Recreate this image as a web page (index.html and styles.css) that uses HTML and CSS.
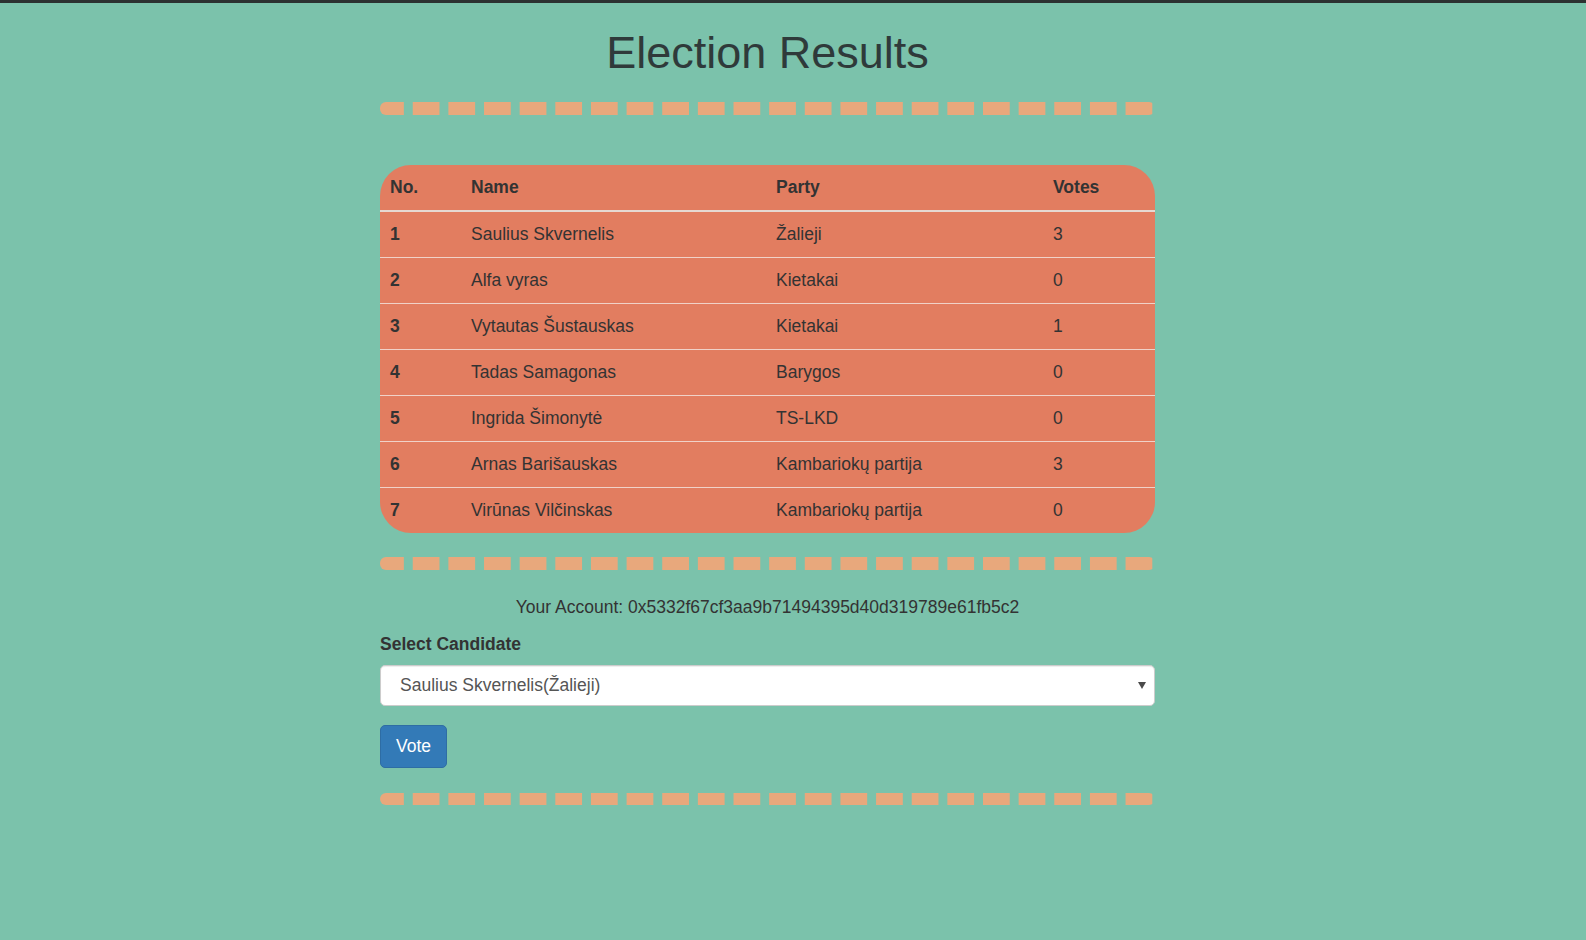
FILE: index.html
```html
<!DOCTYPE html>
<html lang="lt">
<head>
<meta charset="utf-8">
<title>Election Results</title>
<link rel="stylesheet" href="styles.css">
</head>
<body>
<div class="topbar"></div>
<main class="page">
  <h1 class="title">Election Results</h1>
  <div class="dashes dashes-first"></div>

  <div class="results">
    <table class="results-table">
      <colgroup>
        <col class="c-no"><col class="c-name"><col class="c-party"><col class="c-votes">
      </colgroup>
      <thead>
        <tr><th>No.</th><th>Name</th><th>Party</th><th>Votes</th></tr>
      </thead>
      <tbody>
        <tr><th>1</th><td>Saulius Skvernelis</td><td>Žalieji</td><td>3</td></tr>
        <tr><th>2</th><td>Alfa vyras</td><td>Kietakai</td><td>0</td></tr>
        <tr><th>3</th><td>Vytautas Šustauskas</td><td>Kietakai</td><td>1</td></tr>
        <tr><th>4</th><td>Tadas Samagonas</td><td>Barygos</td><td>0</td></tr>
        <tr><th>5</th><td>Ingrida Šimonytė</td><td>TS-LKD</td><td>0</td></tr>
        <tr><th>6</th><td>Arnas Barišauskas</td><td>Kambariokų partija</td><td>3</td></tr>
        <tr><th>7</th><td>Virūnas Vilčinskas</td><td>Kambariokų partija</td><td>0</td></tr>
      </tbody>
    </table>
  </div>

  <div class="dashes dashes-second"></div>

  <p class="account">Your Account: 0x5332f67cf3aa9b71494395d40d319789e61fb5c2</p>

  <form class="vote-form">
    <label class="field-label" for="candidate">Select Candidate</label>
    <div class="select-wrap">
      <select id="candidate" class="select">
        <option>Saulius Skvernelis(Žalieji)</option>
        <option>Alfa vyras(Kietakai)</option>
        <option>Vytautas Šustauskas(Kietakai)</option>
        <option>Tadas Samagonas(Barygos)</option>
        <option>Ingrida Šimonytė(TS-LKD)</option>
        <option>Arnas Barišauskas(Kambariokų partija)</option>
        <option>Virūnas Vilčinskas(Kambariokų partija)</option>
      </select>
      <span class="select-arrow"></span>
    </div>
    <button type="button" class="btn">Vote</button>
  </form>

  <div class="dashes dashes-third"></div>
</main>
</body>
</html>
```

FILE: styles.css
```css
html, body {
  margin: 0;
  padding: 0;
}

body {
  background: #7bc2ab;
  color: #333;
  font-family: "Liberation Sans", Arial, Helvetica, sans-serif;
  font-size: 17.5px;
  line-height: 25px;
  min-height: 940px;
}

.topbar {
  height: 3px;
  background: #2c3131;
}

.page {
  width: 775px;
  margin-left: 380px;
}

.title {
  margin: 25px 0 0;
  font-size: 45px;
  font-weight: 400;
  line-height: 49.5px;
  text-align: center;
  color: #2f3a3a;
}

.dashes {
  height: 12.5px;
  border-radius: 6px;
  background: linear-gradient(to right, #e8a87c 0, #e8a87c 26.5px, transparent 26.5px) -2.9px 0 / 35.65px 100% repeat-x;
}

.dashes-first {
  margin-top: 24.5px;
}

.dashes-second {
  margin-top: 24px;
}

.dashes-third {
  margin-top: 24.5px;
}

.results {
  margin-top: 50px;
  border-radius: 31px;
  overflow: hidden;
  background: #e27d60;
}

.results-table {
  width: 100%;
  border-collapse: separate;
  border-spacing: 0;
  table-layout: fixed;
}

.c-no { width: 81px; }
.c-name { width: 305px; }
.c-party { width: 277px; }
.c-votes { width: 112px; }

.results-table th,
.results-table td {
  padding: 10px;
  height: 25px;
  text-align: left;
  line-height: 25px;
  vertical-align: middle;
}

.results-table thead th {
  font-weight: 700;
  border-bottom: 2.5px solid #e6d9d2;
}

.results-table thead th,
.results-table tbody tr:first-child th,
.results-table tbody tr:first-child td {
  padding-top: 10.4px;
}

.results-table tbody th {
  font-weight: 700;
}

.results-table tbody tr + tr th,
.results-table tbody tr + tr td {
  border-top: 1px solid #f0d2c8;
}

.account {
  margin: 25.5px 0 0;
  text-align: center;
}

.vote-form {
  margin-top: 12px;
}

.field-label {
  display: block;
  font-weight: 700;
  margin-bottom: 7.5px;
}

.select-wrap {
  position: relative;
}

.select {
  display: block;
  width: 100%;
  height: 41px;
  margin: 0;
  padding: 0 30px 0 19px;
  font-family: inherit;
  font-size: 17.5px;
  color: #555;
  background: #fff;
  border: 1.25px solid #ccc;
  border-radius: 5px;
  box-shadow: inset 0 1px 1px rgba(0, 0, 0, 0.075);
  appearance: none;
  -webkit-appearance: none;
  box-sizing: border-box;
}

.select-arrow {
  position: absolute;
  right: 9px;
  top: 17.5px;
  width: 0;
  height: 0;
  border-left: 4px solid transparent;
  border-right: 4px solid transparent;
  border-top: 7px solid #4a4a4a;
  pointer-events: none;
}

.btn {
  display: block;
  margin-top: 19.5px;
  height: 43px;
  padding: 0 15px;
  font-family: inherit;
  font-size: 17.5px;
  color: #fff;
  background: #337ab7;
  border: 1.25px solid #2e6da4;
  border-radius: 5px;
  cursor: pointer;
}
```
